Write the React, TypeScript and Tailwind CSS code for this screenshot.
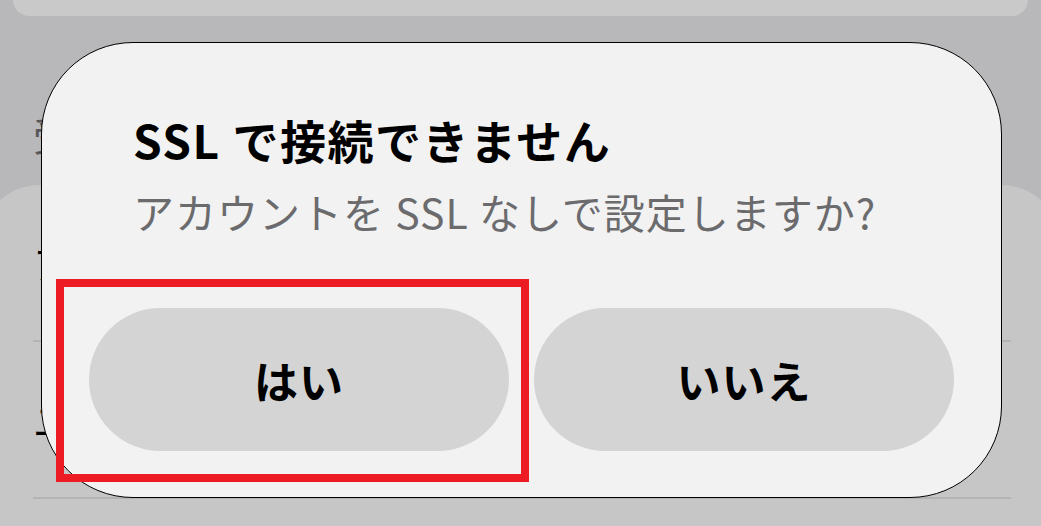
const FONT = "font-['Noto_Sans_CJK_JP','Noto_Sans',sans-serif]";

function SettingsRow({ label }: { label: string }) {
	return (
		<div className="flex h-[157px] items-center border-b-2 border-[#b4b4b4]">
			<span className="text-[40px] leading-none text-black">{label}</span>
		</div>
	);
}

export default function App() {
	return (
		<div
			className={`relative h-[526px] w-[1041px] overflow-hidden bg-[#b8b8ba] ${FONT}`}
		>
			{/* Settings page behind the alert */}
			<div className="mx-[13px] h-[16px] rounded-b-[40px] bg-[#c9c9ca]" />
			<div className="mt-[94px] px-[33px] text-[40px] leading-[48px] text-[#58585a]">
				受信メールサーバ
			</div>
			<div className="mx-[-20px] mt-[27px] h-[400px] rounded-[60px] bg-[#c6c6c6] pl-[53px] pr-[50px]">
				<SettingsRow label="アカウント名" />
				<SettingsRow label="ユーザ名" />
			</div>

			{/* Alert */}
			<div className="absolute left-[41px] top-[42px] flex h-[456px] w-[961px] flex-col rounded-[92px] border-[1.5px] border-black bg-[#f2f2f3] px-[47px] pb-[46px]">
				<h2 className="ml-[44px] mt-[69px] text-[46px] font-bold leading-[54px] tracking-[1.5px] text-black">
					SSL で接続できません
				</h2>
				<p className="ml-[44px] mt-[20px] text-[41px] leading-[50px] tracking-[1px] text-[#6b6b6d]">
					アカウントを SSL なしで設定しますか?
				</p>
				<div className="mt-auto grid grid-cols-2 gap-[25px]">
					<button className="flex h-[143px] items-center justify-center rounded-full bg-[#d4d4d5] text-[44px] font-semibold tracking-[1px] text-black">
						はい
					</button>
					<button className="flex h-[143px] items-center justify-center rounded-full bg-[#d4d4d5] text-[44px] font-semibold tracking-[1px] text-black">
						いいえ
					</button>
				</div>
			</div>

			{/* Highlight box */}
			<div className="absolute left-[56px] top-[279px] h-[203px] w-[473px] border-[8px] border-[#ed1c24]" />
		</div>
	);
}
